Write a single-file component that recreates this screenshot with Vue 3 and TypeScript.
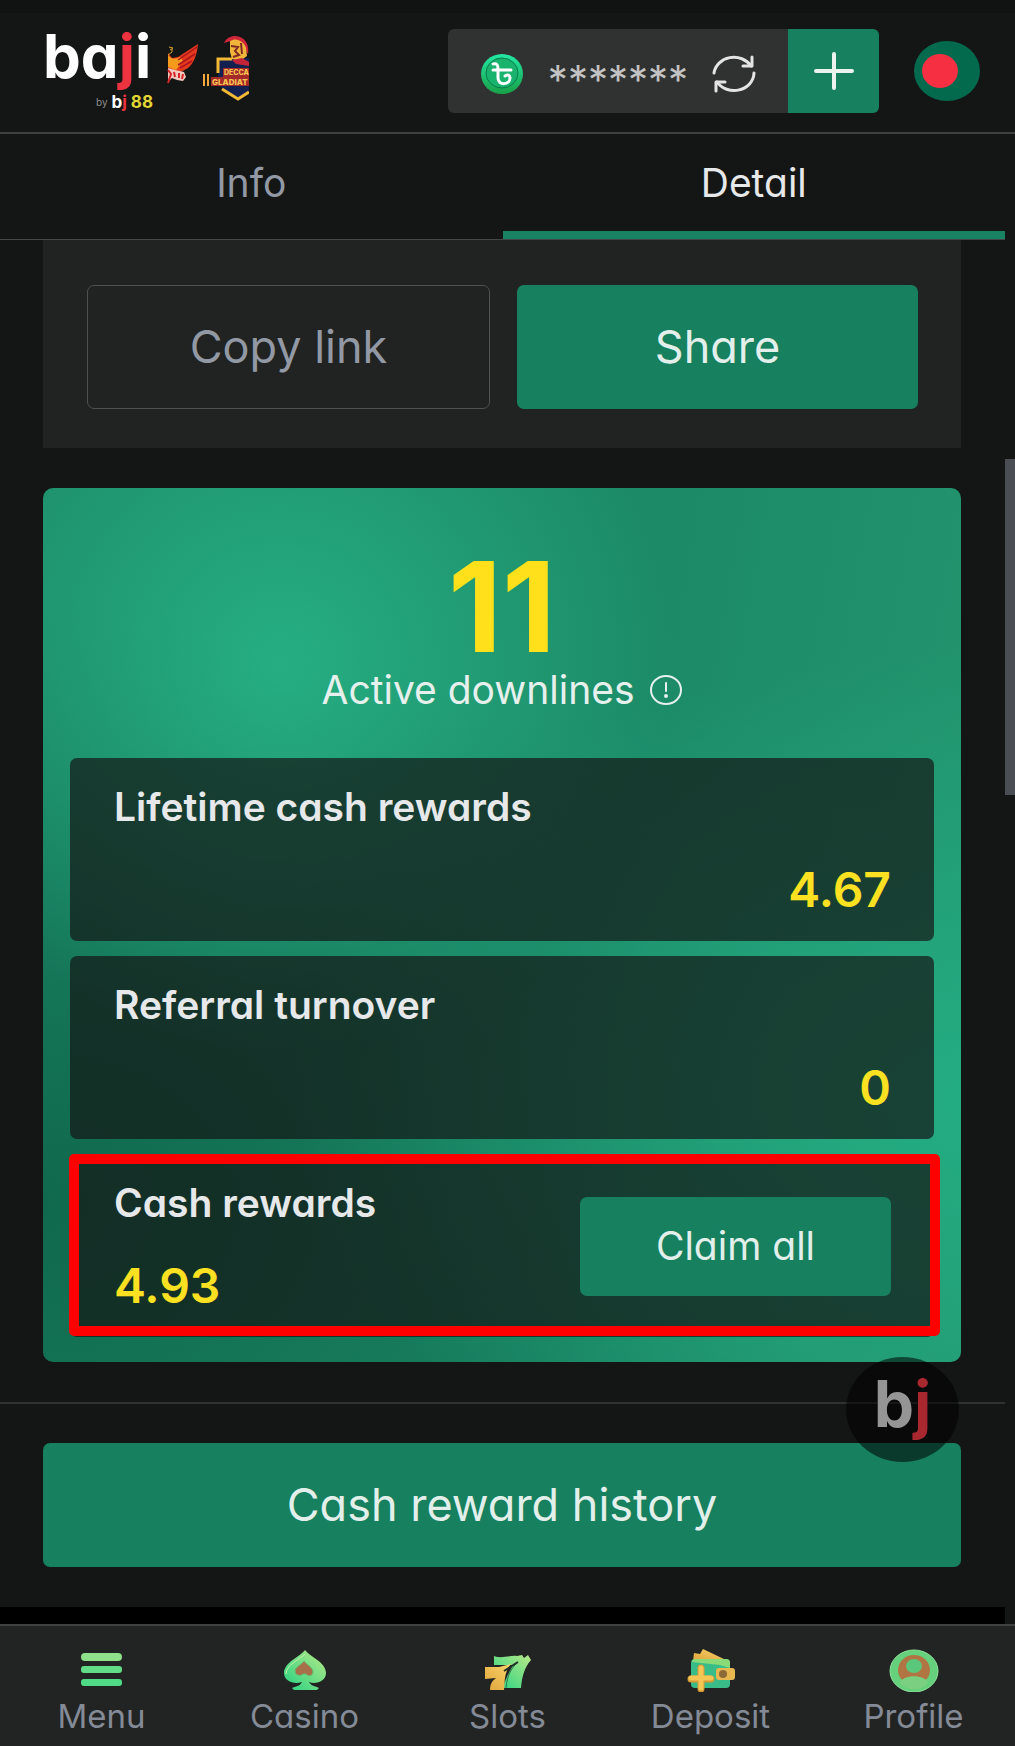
<script setup lang="ts">
import { ref } from 'vue'

interface Reward {
  title: string
  value: string
  claimable?: boolean
}

interface NavItem {
  label: string
  icon: 'menu' | 'casino' | 'slots' | 'deposit' | 'profile'
}

const tabs: string[] = ['Info', 'Detail']
const activeTab = ref<string>('Detail')

const rewards: Reward[] = [
  { title: 'Lifetime cash rewards', value: '4.67' },
  { title: 'Referral turnover', value: '0' },
  { title: 'Cash rewards', value: '4.93', claimable: true },
]

const navItems: NavItem[] = [
  { label: 'Menu', icon: 'menu' },
  { label: 'Casino', icon: 'casino' },
  { label: 'Slots', icon: 'slots' },
  { label: 'Deposit', icon: 'deposit' },
  { label: 'Profile', icon: 'profile' },
]
</script>

<template>
  <div class="page">
    <header class="header">
      <a href="#" class="brand" aria-label="baji home">
        <span class="wordmark">
          <span class="baji">ba<span class="red">j</span>i</span>
          <span class="sub"><span class="by">by</span><span class="bj">b<span class="red">j</span></span><span class="gold">88</span></span>
        </span>
        <svg class="bird" viewBox="0 0 32 42" aria-hidden="true">
          <path d="M1 10 5 15 11 14 31 1 C30 12 27 20 21 25 L12 30 1 25Z" fill="#e5391d" />
          <path d="M1 12 C5 17 8 16 13 14 L16 18 9 27 1 24Z" fill="#f59b1c" />
          <path d="M11 17 30 4M11 22 28 11M13 25 25 18" stroke="#a81520" stroke-width="1.5" />
          <path d="M2 4 6 5 3 7M1 12 5 9 5 6" stroke="#d9a42c" stroke-width="1" fill="none" />
          <path d="M1 25 8 27 17 29 19 34 16 38 10 37 5 35 1 39Z" fill="#f3c9bd" />
          <path d="M1 27 4 31 1 40M7 29 8 34M12 30 12 35M16 31 15 36" stroke="#d4242c" stroke-width="2" fill="none" />
        </svg>
        <svg class="gladiator" viewBox="0 0 46 68" aria-hidden="true">
          <path d="M46 23 H15 V50 L35 65 46 58Z" fill="#14204f" />
          <path d="M29 24 H15 V38 M19 54 L35 64 46 57" fill="none" stroke="#f3b834" stroke-width="3" />
          <path d="M21 8 C24 1 33 -1 39 3 C44 6 46 12 45 19 L40 12 31 5Z" fill="#d0263a" />
          <path d="M27 6 C33 2 41 6 43 13 L44 21 37 26 29 24 27 17Z" fill="#f1b43b" />
          <path d="M28 11 35 12 32 16 36 20 30 22M38 8 39 19" stroke="#7c2a23" stroke-width="2" fill="none" />
          <path d="M29 25 39 23 46 27 46 31 33 29Z" fill="#c3243a" />
          <path d="M0 39H2V51H0ZM4 39H6V51H4Z" fill="#f2a73a" />
          <path d="M8 42H46V51H8ZM20 33H46V42H20Z" fill="#a52a2a" />
          <text x="21" y="40" font-size="7" font-weight="800" fill="#f8c552">DECCA</text>
          <text x="9" y="50" font-size="8" font-weight="800" fill="#f8c552">GLADIAT</text>
        </svg>
      </a>

      <div class="wallet">
        <div class="balance">
          <svg class="coin" viewBox="0 0 44 42" aria-hidden="true">
            <defs>
              <linearGradient id="coin" x1="0" y1="0" x2="0" y2="1">
                <stop offset="0" stop-color="#23e8a4" />
                <stop offset="1" stop-color="#18a046" />
              </linearGradient>
            </defs>
            <ellipse cx="22" cy="21" rx="21" ry="20" fill="url(#coin)" />
            <ellipse cx="22" cy="20" rx="16" ry="15" fill="#19b36d" stroke="#087a4d" stroke-width="1" />
            <path d="M13 11 C17 10 18 12 18 16 V25 C18 33 30 32 30 25 C30 22 28 21 25 23 M13 17 H31" fill="none" stroke="#fff" stroke-width="3" stroke-linecap="round" />
          </svg>
          <span class="stars">*******</span>
          <button class="icon-btn" type="button" aria-label="Refresh balance">
            <svg viewBox="0 0 44 42" class="refresh" aria-hidden="true">
              <path d="M2 20 A20 18 0 0 1 39 13 M42 20 A20 18 0 0 1 5 29" fill="none" stroke="#e4e4e4" stroke-width="3" stroke-linecap="round" />
              <path d="M40 4 V13 H31 M4 38 V29 H13" fill="none" stroke="#e4e4e4" stroke-width="3" stroke-linecap="round" stroke-linejoin="round" />
            </svg>
          </button>
        </div>
        <button class="add" type="button" aria-label="Add funds">
          <svg viewBox="0 0 40 38" class="plus" aria-hidden="true">
            <path d="M20 2V36M2 19H38" stroke="#ecf3ef" stroke-width="4" stroke-linecap="round" />
          </svg>
        </button>
      </div>

      <button class="flag" type="button" aria-label="Bangladesh">
        <svg viewBox="0 0 66 60" aria-hidden="true">
          <ellipse cx="33" cy="30" rx="33" ry="30" fill="#046a4e" />
          <ellipse cx="26" cy="30" rx="18" ry="17" fill="#f62f43" />
        </svg>
      </button>
    </header>

    <div class="body">
      <main class="content">
        <nav class="tabs">
          <button
            v-for="tab in tabs"
            :key="tab"
            type="button"
            class="tab"
            :class="{ active: tab === activeTab }"
            @click="activeTab = tab"
          >
            {{ tab }}
          </button>
        </nav>

        <section class="share-panel">
          <button type="button" class="btn outline">Copy link</button>
          <button type="button" class="btn primary">Share</button>
        </section>

        <section class="summary">
          <div class="count">11</div>
          <div class="caption">
            <span>Active downlines</span>
            <svg viewBox="0 0 34 32" class="info" aria-hidden="true">
              <ellipse cx="17" cy="16" rx="15" ry="14" fill="none" stroke="#e6f0ec" stroke-width="2" />
              <path d="M17 9V17" stroke="#e6f0ec" stroke-width="2" stroke-linecap="round" />
              <circle cx="17" cy="22" r="2" fill="#e6f0ec" />
            </svg>
          </div>
          <div class="rewards">
            <div
              v-for="reward in rewards"
              :key="reward.title"
              class="reward"
              :class="{ claimable: reward.claimable }"
            >
              <div class="reward-text">
                <h2>{{ reward.title }}</h2>
                <p>{{ reward.value }}</p>
              </div>
              <button v-if="reward.claimable" type="button" class="claim">Claim all</button>
            </div>
          </div>
        </section>

        <section class="history">
          <button type="button" class="btn primary">Cash reward history</button>
          <button type="button" class="float" aria-label="Open bj menu">
            <span class="float-mark">b<span class="float-red">j</span></span>
          </button>
        </section>
        <div class="strip"></div>
      </main>
      <div class="track"><div class="thumb"></div></div>
    </div>

    <nav class="bottom">
      <a v-for="item in navItems" :key="item.label" href="#" class="nav-item">
        <svg viewBox="0 0 50 44" class="nav-icon" aria-hidden="true">
          <defs>
            <linearGradient :id="'g-' + item.icon" x1="1" y1="0" x2="0" y2="1">
              <stop offset="0" stop-color="#b9ea88" />
              <stop offset="1" stop-color="#25d282" />
            </linearGradient>
            <linearGradient :id="'y-' + item.icon" x1="1" y1="0" x2="0" y2="1">
              <stop offset="0" stop-color="#f8d66b" />
              <stop offset="1" stop-color="#e0a23b" />
            </linearGradient>
          </defs>
          <template v-if="item.icon === 'menu'">
            <rect x="4" y="5" width="41" height="8" rx="4" fill="#8fe08a" />
            <rect x="4" y="18" width="41" height="7" rx="3" fill="#62dc86" />
            <rect x="4" y="31" width="41" height="7" rx="3" fill="#4fdb85" />
          </template>
          <template v-else-if="item.icon === 'casino'">
            <path d="M25 2 C30 9 46 14 46 25 C46 33 36 37 29 34 C31 38 35 38 39 40 L37 42 H14 L12 40 C17 38 20 38 22 34 C14 37 4 33 4 25 C4 14 20 9 25 2Z" fill="url(#g-casino)" />
            <path d="M6 26 C6 17 19 12 25 6" fill="none" stroke="#c4efb0" stroke-width="1" />
            <path d="M24 13 C27 17 33 19 33 24 C33 28 28 29 26 26 H23 C20 29 15 27 15 23 C15 19 21 17 24 13Z" fill="#a87048" stroke="#62bf75" />
          </template>
          <template v-else-if="item.icon === 'slots'">
            <path d="M11 8 C18 11 28 7 34 8 L39 7 41 10 45 7 48 12 C41 20 39 29 38 40 H20 C22 31 27 23 30 17 H11Z" fill="url(#g-slots)" />
            <path d="M2 19 H16 L28 16 C21 24 22 33 21 42 H7 C7 36 9 33 13 30 L2 31Z" fill="url(#y-slots)" />
            <path d="M35 14 C29 19 24 27 23 40" fill="none" stroke="#27774c" stroke-width="1" />
            <path d="M35 14 21 23" fill="none" stroke="#222d28" stroke-width="2" />
          </template>
          <template v-else-if="item.icon === 'deposit'">
            <path d="M7 13 8 5 14 6 17 1 42 13Z" fill="url(#y-deposit)" />
            <rect x="5" y="11" width="39" height="29" rx="4" fill="#38bd88" />
            <path d="M6 14 Q6 11 9 11 H40 Q44 11 44 15 V20 L34 17Z" fill="#8adb78" />
            <rect x="30" y="20" width="19" height="12" rx="3" fill="#e8b850" />
            <circle cx="37" cy="26" r="4" fill="#8c6b38" />
            <path d="M15 20V41M5 31H25" stroke="#d89a35" stroke-width="7" stroke-linecap="round" />
            <path d="M15 20V40M5 30H25" stroke="#f4c654" stroke-width="5" stroke-linecap="round" />
          </template>
          <template v-else>
            <ellipse cx="25" cy="23" rx="24" ry="21" fill="#66d17d" stroke="#8ee39b" />
            <ellipse cx="25" cy="22" rx="16" ry="15" fill="#b07542" />
            <ellipse cx="25" cy="18" rx="8" ry="7" fill="#5bc77a" />
            <path d="M11 35 C13 26 37 26 39 35 C33 43 17 43 11 35Z" fill="#7bcf80" />
          </template>
        </svg>
        <span>{{ item.label }}</span>
      </a>
    </nav>
  </div>
</template>

<style>
body {
  margin: 0;
  background: #141615;
}
</style>

<style scoped>
.page {
  display: flex;
  flex-direction: column;
  background: #141615;
  color: #e6e8ea;
  font-family: Inter, 'Open Sans', sans-serif;
  font-feature-settings: 'cv11';
}

button {
  margin: 0;
  padding: 0;
  border: 0;
  background: none;
  color: inherit;
  font: inherit;
  font-feature-settings: inherit;
  cursor: pointer;
}

a {
  color: inherit;
  text-decoration: none;
}

svg {
  display: block;
}

.header {
  box-sizing: border-box;
  height: 134px;
  display: flex;
  align-items: center;
  padding: 0 35px 3px 43px;
  border-top: 13px solid #111212;
  border-bottom: 2px solid #3e4040;
}

.brand {
  display: flex;
  align-items: flex-start;
  height: 84px;
}

.wordmark {
  display: flex;
  flex-direction: column;
  width: 112px;
  margin-right: 12px;
  color: #fff;
}

.baji {
  font-size: 60px;
  line-height: 54px;
  font-weight: 700;
}

.sub {
  display: flex;
  align-items: center;
  justify-content: flex-end;
  gap: 4px;
  margin-top: 10px;
  padding-right: 2px;
  font-size: 17px;
  line-height: 18px;
  font-weight: 700;
}

.by {
  font-size: 10px;
  font-weight: 400;
  color: #8a8c8b;
}

.red {
  color: #ee3340;
}

.gold {
  color: #e3d634;
}

.bird {
  width: 32px;
  height: 42px;
  margin: 14px 4px 0 0;
}

.gladiator {
  width: 46px;
  height: 68px;
  margin-top: 6px;
}

.wallet {
  display: flex;
  height: 84px;
  margin-left: auto;
  border-radius: 6px;
  overflow: hidden;
}

.balance {
  box-sizing: border-box;
  width: 340px;
  display: flex;
  align-items: center;
  padding: 6px 32px 0;
  background: #303131;
}

.coin,
.refresh {
  width: 44px;
  height: 42px;
}

.stars {
  flex: 1;
  text-align: center;
  font-size: 40px;
  line-height: 42px;
  padding-top: 12px;
  color: #c2c2c2;
}

.add {
  width: 91px;
  display: flex;
  align-items: center;
  justify-content: center;
  background: #16805f;
}

.plus {
  width: 40px;
  height: 38px;
}

.flag {
  margin-left: 35px;
}

.flag svg {
  width: 66px;
  height: 60px;
}

.body {
  display: flex;
}

.content {
  flex: 1;
  min-width: 0;
}

.track {
  width: 10px;
}

.thumb {
  height: 336px;
  margin-top: 325px;
  background: #4a4d54;
}

.tabs {
  display: flex;
  border-bottom: 1px solid #454747;
}

.tab {
  flex: 1;
  height: 105px;
  border-bottom: 8px solid transparent;
  font-size: 39px;
  line-height: 42px;
  color: #9299a5;
}

.tab.active {
  border-bottom-color: #198262;
  color: #e6e8ea;
}

.share-panel {
  display: flex;
  gap: 27px;
  margin: 0 44px 0 43px;
  padding: 45px 43px 39px 44px;
  background: #212322;
}

.btn {
  box-sizing: border-box;
  flex: 1;
  height: 124px;
  border-radius: 7px;
  font-size: 45px;
  line-height: 48px;
}

.outline {
  border: 1px solid #4f5151;
  color: #9299a5;
}

.primary {
  background: #16805f;
  color: #e2efea;
}

.summary {
  margin: 40px 44px 40px 43px;
  padding: 56px 27px 25px;
  border-radius: 10px;
  background:
    radial-gradient(circle at 26% 20%, #26ae82 0, #26ae8200 40%),
    radial-gradient(ellipse at 102% 70%, #24ad82 0, #24ad8200 52%),
    radial-gradient(ellipse at 0 82%, #10694d 0, #126d5000 60%),
    linear-gradient(100deg, #1c8a67 0, #1c8a67 60%, #23966f 100%);
}

.count {
  text-align: center;
  font-size: 125px;
  line-height: 125px;
  font-weight: 700;
  color: #ffe01b;
}

.caption {
  display: flex;
  align-items: center;
  justify-content: center;
  gap: 14px;
  font-size: 39px;
  line-height: 42px;
  color: #e6f0ec;
}

.info {
  width: 34px;
  height: 32px;
}

.rewards {
  display: flex;
  flex-direction: column;
  gap: 15px;
  margin-top: 47px;
}

.reward {
  position: relative;
  display: flex;
  align-items: center;
  padding: 28px 43px 27px 44px;
  border-radius: 7px;
  background: rgba(20, 22, 21, 0.7);
}

.reward-text {
  flex: 1;
}

.reward h2 {
  margin: 0 0 38px;
  font-size: 39px;
  line-height: 42px;
  font-weight: 600;
}

.reward p {
  margin: 0;
  font-size: 48px;
  line-height: 48px;
  font-weight: 600;
  text-align: right;
  color: #fbe122;
}

.reward.claimable p {
  text-align: left;
}

.claimable::after {
  content: '';
  position: absolute;
  inset: 0 -6px 1px -1px;
  border: 10px solid #ff0000;
  border-radius: 5px;
  pointer-events: none;
}

.claim {
  width: 311px;
  height: 99px;
  border-radius: 7px;
  background: #16805f;
  color: #e2efea;
  font-size: 39px;
  line-height: 42px;
}

.history {
  position: relative;
  display: flex;
  padding: 39px 44px 40px 43px;
  border-top: 2px solid #303232;
}

.float {
  position: absolute;
  top: -47px;
  right: 46px;
  width: 113px;
  height: 105px;
  border-radius: 50%;
  background: rgba(0, 0, 0, 0.55);
}

.float-mark {
  display: block;
  font-size: 64px;
  line-height: 80px;
  padding-bottom: 12px;
  font-weight: 700;
  color: #959595;
}

.float-red {
  color: #a9282f;
}

.strip {
  height: 17px;
  background: #000;
}

.bottom {
  display: flex;
  border-top: 2px solid #3f4141;
  background: #222423;
}

.nav-item {
  flex: 1;
  display: flex;
  flex-direction: column;
  align-items: center;
  gap: 6px;
  padding: 22px 0 12px;
  font-size: 33px;
  line-height: 36px;
  color: #848b97;
}

.nav-icon {
  width: 50px;
  height: 44px;
}
</style>
